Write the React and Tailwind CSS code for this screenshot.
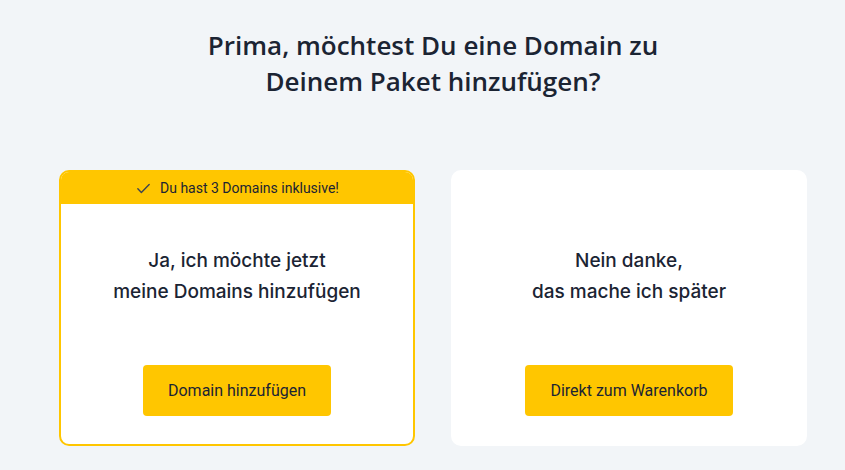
import React from 'react';

const Check = () => (
  <svg width="17" height="17" viewBox="0 0 24 24" fill="none" stroke="#3d4451" strokeWidth="2" strokeLinecap="round" strokeLinejoin="round">
    <path d="M4 12.5l5 5L20 6.5" />
  </svg>
);

const Card = ({ banner, lines, button }) => (
  <div
    className={`w-[356px] h-[276px] rounded-[10px] bg-white flex flex-col overflow-hidden border-2 ${
      banner ? 'border-[#ffc600]' : 'border-white'
    }`}
  >
    {banner && (
      <div className="h-[32px] bg-[#ffc600] flex items-center justify-center gap-[8px] text-[14px] text-[#1b2433] shrink-0">
        <Check />
        <span>Du hast 3 Domains inklusive!</span>
      </div>
    )}
    <div className="flex-1 flex flex-col items-center justify-between pb-[28px]">
      <div
        className={`text-center text-[19px] font-medium leading-[31px] text-[#1b2433] ${banner ? 'pt-[41px]' : 'pt-[73px]'}`}
        style={{ fontFamily: 'Inter, "Noto Sans", sans-serif' }}
      >
        {lines.map((l) => (
          <div key={l}>{l}</div>
        ))}
      </div>
      <button className="h-[51px] px-[25px] rounded-[4px] bg-[#ffc600] text-[16px] text-[#1b2433]">
        {button}
      </button>
    </div>
  </div>
);

export default function App() {
  return (
    <div
      className="w-[845px] h-[470px] bg-[#f2f5f8] pl-[59px] pr-[38px] overflow-hidden"
      style={{ fontFamily: 'Roboto, "Noto Sans", sans-serif' }}
    >
      <h1
        className="pt-[27px] text-center text-[26px] font-semibold leading-[36px] text-[#1b2433]"
        style={{ fontFamily: '"Open Sans", "Noto Sans", sans-serif' }}
      >
        Prima, möchtest Du eine Domain zu
        <br />
        Deinem Paket hinzufügen?
      </h1>
      <div className="mt-[71px] flex gap-[36px]">
        <Card
          banner
          lines={['Ja, ich möchte jetzt', 'meine Domains hinzufügen']}
          button="Domain hinzufügen"
        />
        <Card lines={['Nein danke,', 'das mache ich später']} button="Direkt zum Warenkorb" />
      </div>
    </div>
  );
}
